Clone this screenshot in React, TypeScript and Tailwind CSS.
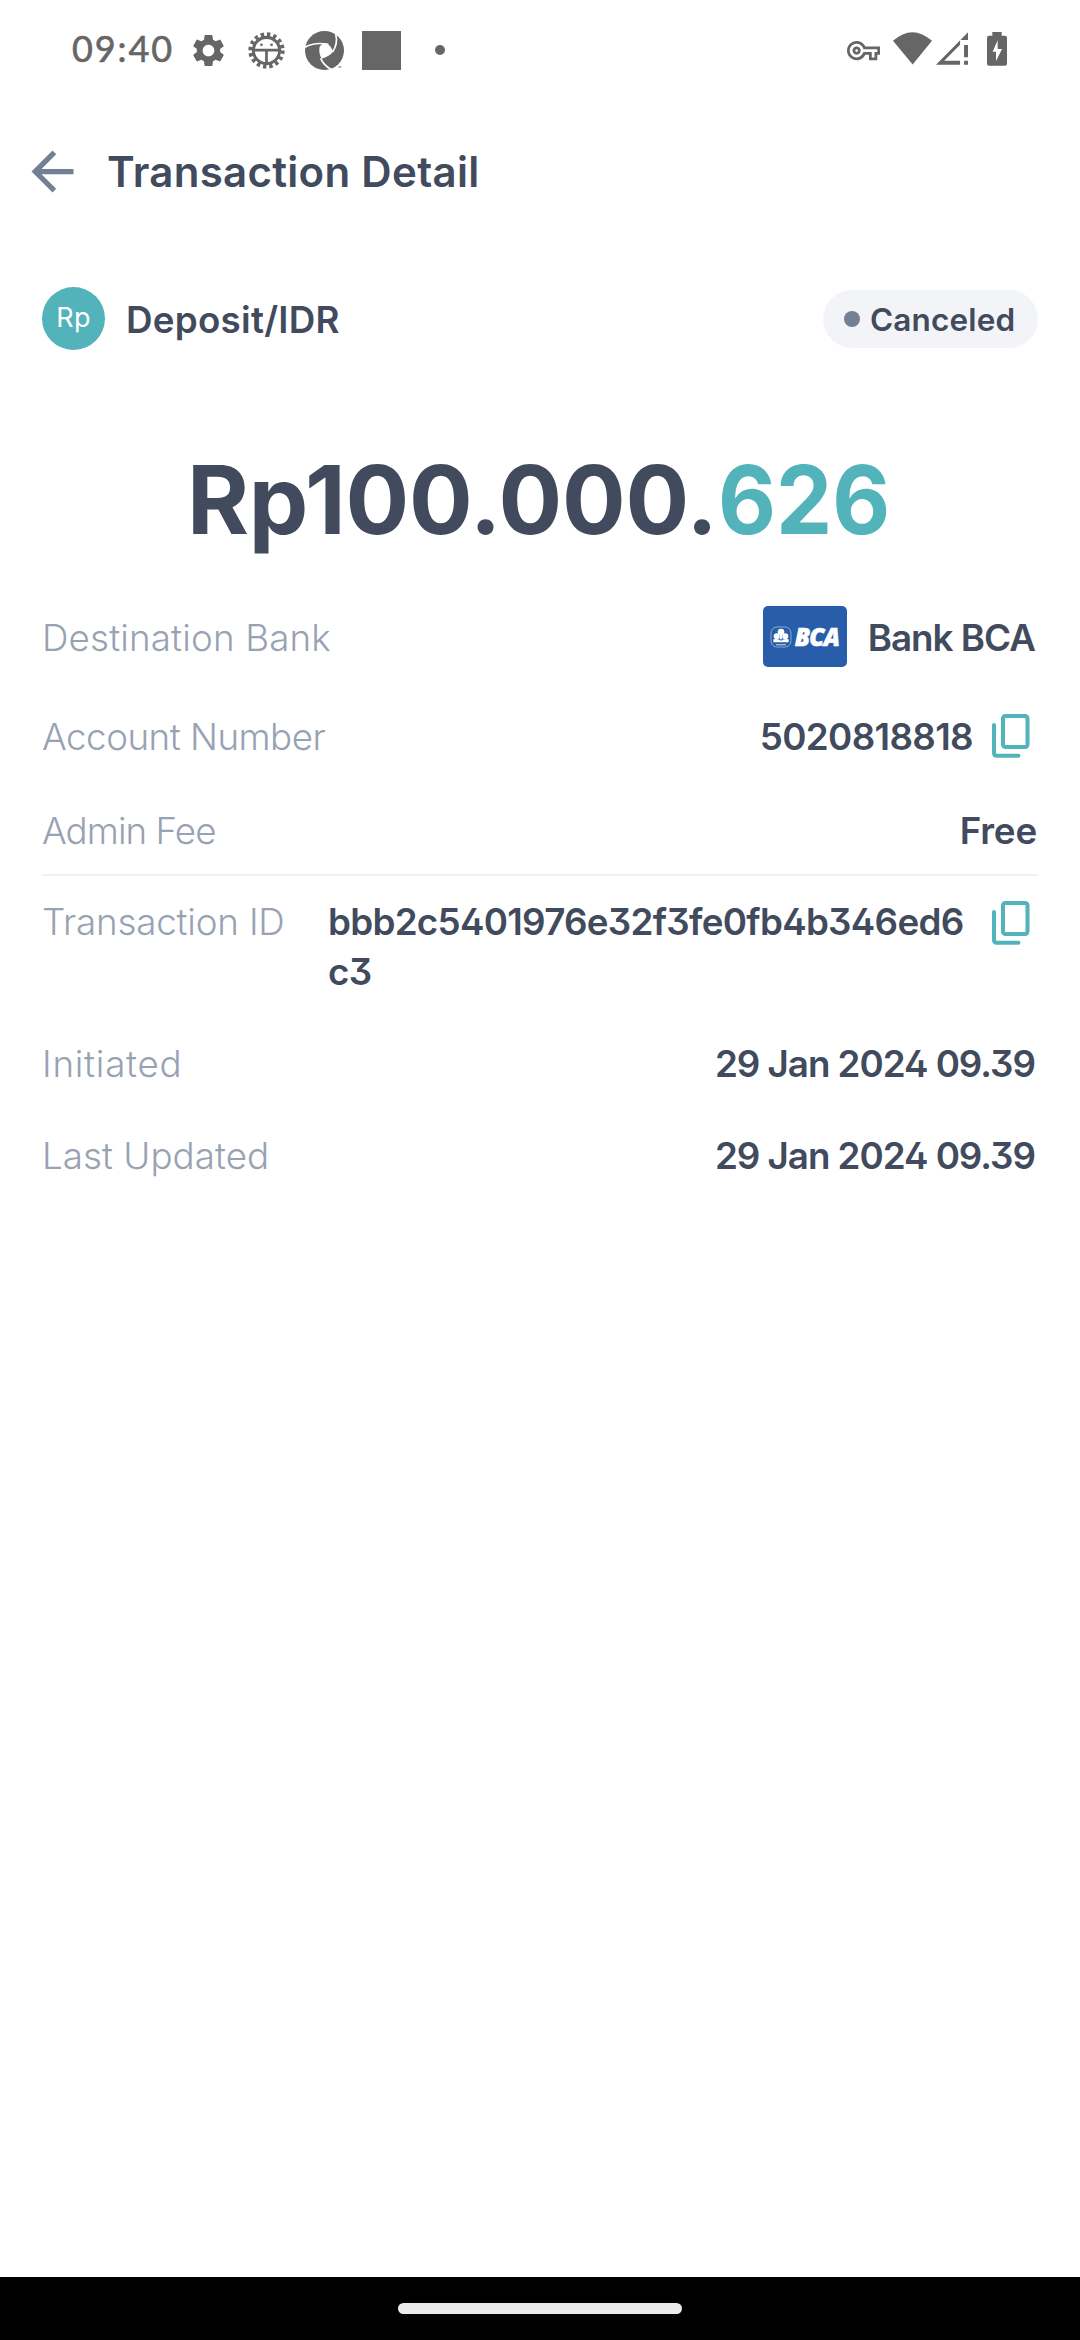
import type { ReactNode } from "react";
import { MdArrowBack, MdOutlineVpnKey, MdSettings } from "react-icons/md";

function GearFaceIcon() {
  return (
    <svg viewBox="-55 -55 110 110" className="h-[37px] w-[37px]" fill="none" stroke="currentColor">
      <circle r="48" strokeWidth="12" strokeDasharray="10 8.85" />
      <circle r="39" strokeWidth="9" />
      <path d="M-40 -1H40M0 -1V40" strokeWidth="8" />
      <circle cx="-15" cy="-17" r="4" fill="currentColor" stroke="none" />
      <circle cx="15" cy="-17" r="4" fill="currentColor" stroke="none" />
    </svg>
  );
}

function ShutterIcon() {
  return (
    <svg viewBox="0 0 117 117" className="h-[39px] w-[39px]">
      <circle cx="58.500" cy="58.500" r="58.500" fill="currentColor" />
      <path d="M44 47Q52 36 66 38Q76 42 84 61Q76 76 50 83Q40 66 44 47Z" fill="#fff" />
      <g fill="none" stroke="#fff" strokeWidth="5">
        <path d="M0 49Q28 32 70 40" />
        <path d="M92 8Q100 38 82 64" />
        <path d="M47 82Q56 104 82 117" />
      </g>
      <path d="M78 117Q98 112 108 100L117 117Z" fill="#fff" />
      <path d="M100 108H109" stroke="currentColor" strokeWidth="3" />
    </svg>
  );
}

function WifiIcon() {
  return (
    <svg viewBox="216 66 117 98" className="h-[33px] w-[39px]" fill="currentColor">
      <path d="M216 92Q274 40 333 92L275 163Z" />
    </svg>
  );
}

function SignalIcon() {
  return (
    <svg viewBox="344 66 97 99" className="h-[33px] w-[32px]" fill="currentColor">
      <path d="M441 66V90H417V104L369 153H417V165H344Z" />
      <path d="M429 105H441V142H429ZM429 153H441V165H429Z" />
    </svg>
  );
}

function BatteryIcon() {
  return (
    <svg viewBox="498 66 60 102" className="h-[34px] w-[20px]" fill="currentColor">
      <path d="M514 66H542V77H552Q558 77 558 83V161Q558 167 552 167H504Q498 167 498 161V83Q498 77 504 77H514Z" />
      <path d="M530 91L515 125H525V153L543 117H530Z" fill="#fff" />
    </svg>
  );
}

function CopyIcon({ className }: { className?: string }) {
  return (
    <svg viewBox="0 0 38 44" className={`h-[44px] w-[38px] shrink-0 text-[#52b3bb] ${className ?? ""}`} fill="none" stroke="currentColor" strokeWidth="4">
      <rect x="11" y="2" width="24.500" height="31" rx="2.500" />
      <path d="M2 11V39Q2 41.700 4.700 41.700H26.500" strokeLinecap="round" />
    </svg>
  );
}

function BankLogo() {
  return (
    <div className="mb-[2px] flex h-[61px] w-[84px] items-center rounded-[5px] bg-[#285ea9] pl-[7px] text-white">
      <svg viewBox="0 0 66 66" className="h-[22px] w-[22px] shrink-0" fill="none" stroke="#fff">
        <rect x="3" y="3" width="60" height="60" rx="18" strokeWidth="2.500" opacity=".55" />
        <g fill="#fff" stroke="none">
          <circle cx="33" cy="18" r="10" />
          <circle cx="20" cy="31" r="9" />
          <circle cx="46" cy="31" r="9" />
          <path d="M29 24H37V40H29ZM10 40Q24 36 33 44Q42 36 56 40V49H10Z" />
        </g>
        <path d="M18 56H48" strokeWidth="4" opacity=".6" />
      </svg>
      <span className="ml-[3px] font-['Open_Sans'] text-[24px] leading-none font-extrabold tracking-[-0.600px] italic [-webkit-text-stroke:0.6px_#fff]">BCA</span>
    </div>
  );
}

function Row({ label, tracking, className, children }: { label: string; tracking: string; className: string; children: ReactNode }) {
  return (
    <div className={`flex items-center justify-between ${className}`}>
      <span className={`font-[350] text-[#98a2b3] ${tracking}`}>{label}</span>
      {children}
    </div>
  );
}

export default function App() {
  return (
    <div className="flex h-[2340px] w-[1080px] flex-col bg-white font-['Inter',sans-serif] text-[36.75px] leading-[50px] font-semibold whitespace-nowrap text-[#414b5d] [font-feature-settings:'cv02','cv09']">
      <div className="flex h-[100px] items-center justify-between pr-[73px] pl-[72px] text-[#666]">
        <div className="flex items-center">
          <span className="mb-[4px] w-[117px] font-['Lato'] text-[36px] font-normal tracking-[1.900px] [-webkit-text-stroke:0.6px_#666]">09:40</span>
          <MdSettings className="h-[39px] w-[39px]" />
          <span className="ml-[20px]"><GearFaceIcon /></span>
          <span className="ml-[19.500px]"><ShutterIcon /></span>
          <span className="ml-[18px] h-[39px] w-[39px] bg-[#666]" />
          <span className="ml-[34px] h-[10px] w-[10px] rounded-full bg-[#666]" />
        </div>
        <div className="flex items-center">
          <MdOutlineVpnKey className="h-[33px] w-[33px]" />
          <span className="ml-[13px] mb-[3px]"><WifiIcon /></span>
          <span className="ml-[4px] mb-[3px]"><SignalIcon /></span>
          <span className="ml-[19px] mb-[2px]"><BatteryIcon /></span>
        </div>
      </div>

      <header className="flex h-[143px] items-center pl-[21px]">
        <MdArrowBack className="h-[63px] w-[63px] text-[#737f93]" />
        <h1 className="ml-[23px] text-[42px] tracking-[0.300px]">Transaction Detail</h1>
      </header>

      <main className="flex grow flex-col px-[42px] pt-[44px]">
        <div className="flex h-[63px] items-center">
          <div className="flex h-[63px] w-[63px] items-center justify-center rounded-full bg-[#52b3bb] pb-[2px] text-[27px] font-normal tracking-[0.300px] text-white">Rp</div>
          <span className="mt-[2px] ml-[21px] tracking-[0.260px]">Deposit/IDR</span>
          <div className="ml-auto flex h-[58px] w-[215px] items-center rounded-full bg-[#f2f4f7] pl-[21px]">
            <span className="h-[16px] w-[16px] rounded-full bg-[#737f93]" />
            <span className="mt-[3px] ml-[10px] text-[31.500px] tracking-[0.150px]">Canceled</span>
          </div>
        </div>

        <div className="mt-[95px] flex h-[110px] items-center pl-[145px] text-[94.500px] leading-[110px] font-bold">
          <span className="tracking-[-0.200px]">Rp100.000.</span>
          <span className="inline-block origin-left scale-x-[0.945] text-[#52b3bb]">626</span>
        </div>

        <Row label="Destination Bank" tracking="tracking-[0.150px]" className="mt-[51px] h-[63px]">
          <div className="flex items-center pr-[3px]">
            <BankLogo />
            <span className="ml-[21px] tracking-[-0.980px]">Bank BCA</span>
          </div>
        </Row>
        <Row label="Account Number" tracking="tracking-[-0.500px]" className="mt-[43px] h-[50px]">
          <div className="flex items-center pr-[8px]">
            <span className="mr-[19px] tracking-[-0.650px]">5020818818</span>
            <CopyIcon className="mb-[2px]" />
          </div>
        </Row>
        <Row label="Admin Fee" tracking="tracking-[-0.950px]" className="mt-[44px] h-[50px]">
          <span className="pr-[1px] tracking-[-0.160px]">Free</span>
        </Row>
        <div className="mt-[18px] h-[2px] bg-[#f2f2f3]" />
        <div className="mt-[21px] flex items-start">
          <span className="w-[286px] font-[350] tracking-[-0.200px] text-[#98a2b3]">Transaction ID</span>
          <span className="w-[642px] break-all whitespace-normal tracking-[-0.710px]">bbb2c5401976e32f3fe0fb4b346ed6c3</span>
          <CopyIcon className="mt-[4px] ml-[22px]" />
        </div>
        <Row label="Initiated" tracking="tracking-[0.750px]" className="mt-[42px] h-[50px]">
          <span className="pr-[3px] tracking-[-1.030px]">29 Jan 2024 09.39</span>
        </Row>
        <Row label="Last Updated" tracking="tracking-[0.030px]" className="mt-[42px] h-[50px]">
          <span className="pr-[3px] tracking-[-1.030px]">29 Jan 2024 09.39</span>
        </Row>
      </main>

      <footer className="flex h-[63px] items-center justify-center bg-black">
        <div className="h-[11px] w-[284px] rounded-full bg-[#ebebeb]" />
      </footer>
    </div>
  );
}
